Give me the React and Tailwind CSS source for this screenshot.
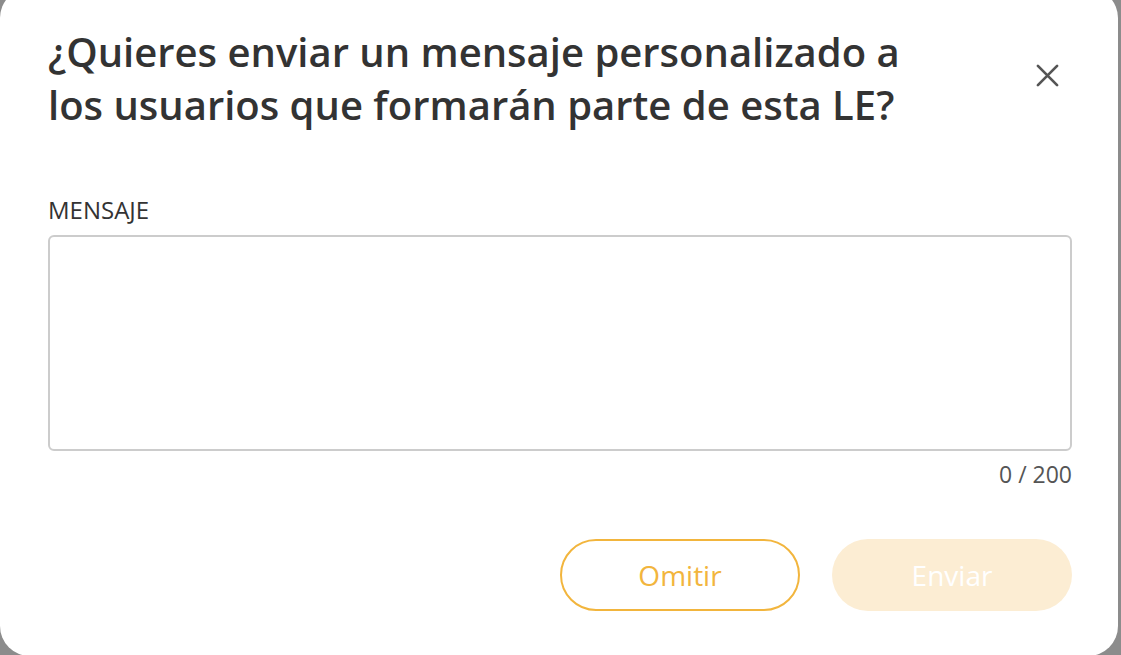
import React from "react";

export default function App() {
  return (
    <div className="w-[1121px] h-[655px] overflow-hidden bg-[#8c8c8c]" style={{ fontFamily: '"Open Sans", sans-serif' }}>
      <div className="relative w-[1118px] h-[668px] -mt-[12px] rounded-[30px] bg-white pt-[37px] px-[48px]">
        <div className="flex items-start justify-between w-[1023px]">
          <h1 className="text-[40px] leading-[53px] font-semibold text-[#333333]">
            ¿Quieres enviar un mensaje personalizado a<br />los usuarios que formarán parte de esta LE?
          </h1>
          <button className="mt-[38px] mr-[12px] w-[24px] h-[24px] flex items-center justify-center text-[#555555]">
            <svg width="23" height="23" viewBox="0 0 24 24" fill="none" stroke="currentColor" strokeWidth="2.8" strokeLinecap="round">
              <path d="M2 2 L22 22 M22 2 L2 22" />
            </svg>
          </button>
        </div>
        <label className="block mt-[67px] text-[24px] leading-[24px] text-[#333333]">MENSAJE</label>
        <div className="mt-[13px] h-[216px] w-[1024px] rounded-[6px] border-2 border-[#cccccc]"></div>
        <div className="mt-[11px] w-[1024px] text-right text-[23px] leading-[24px] text-[#555555]">0 / 200</div>
        <div className="mt-[53px] w-[1024px] flex justify-end gap-[32px]">
          <button className="w-[240px] h-[72px] rounded-full border-2 border-[#f2b53d] text-[#f2b53d] text-[28px] bg-white">
            Omitir
          </button>
          <button className="w-[240px] h-[72px] rounded-full bg-[#fcedd3] text-white text-[28px]">
            Enviar
          </button>
        </div>
      </div>
    </div>
  );
}
